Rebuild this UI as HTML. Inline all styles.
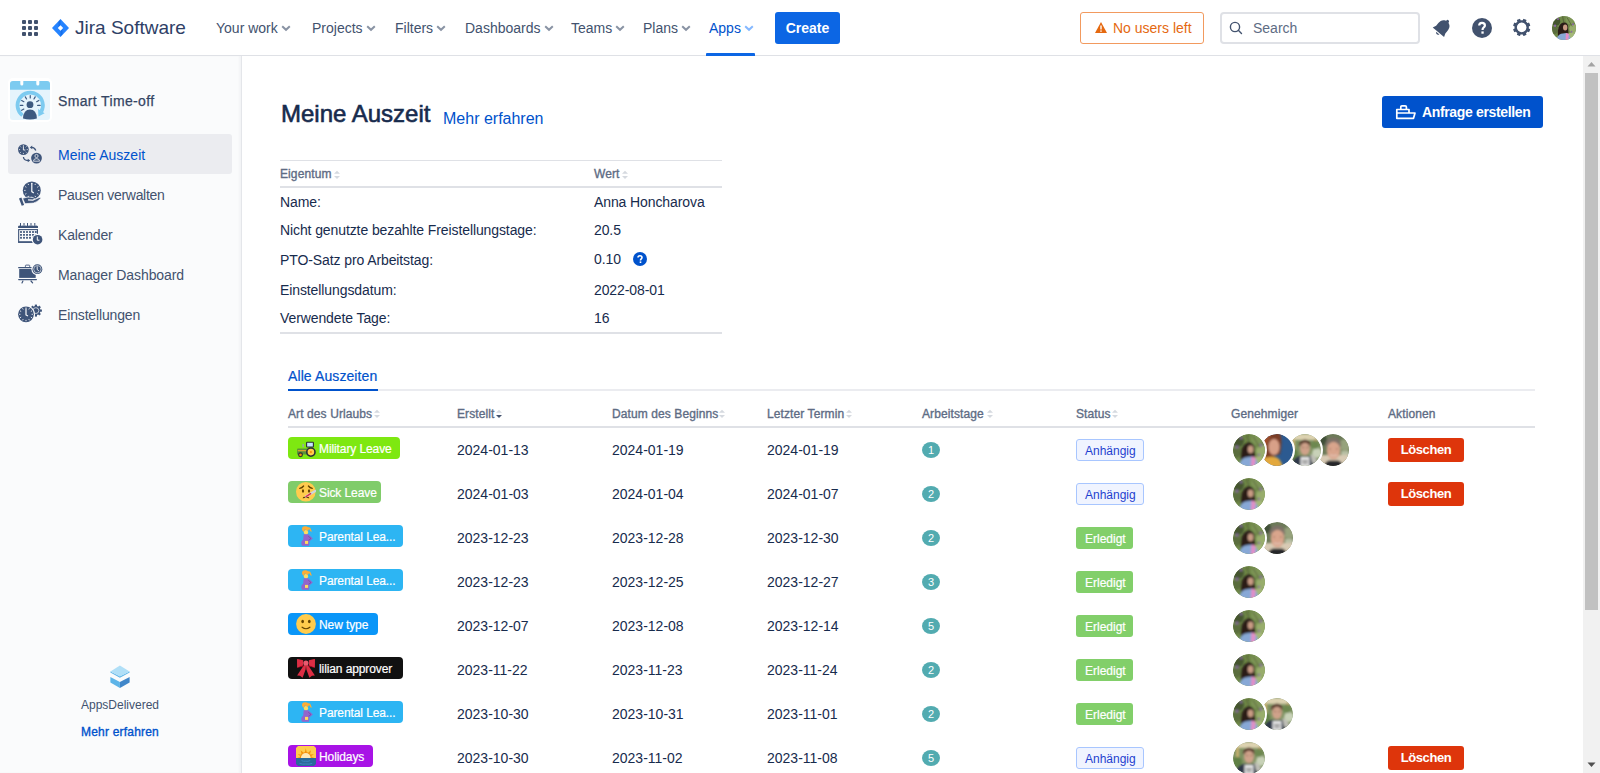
<!DOCTYPE html>
<html><head><meta charset="utf-8">
<style>
*{box-sizing:border-box;margin:0;padding:0}
html,body{width:1600px;height:773px;overflow:hidden;background:#fff;font-family:"Liberation Sans",sans-serif;color:#172B4D}
.a{position:absolute;white-space:nowrap}
#hdr{position:absolute;left:0;top:0;width:1600px;height:56px;background:#fff;border-bottom:1px solid #DFE1E6}
.nav{position:absolute;top:19px;font-size:14px;color:#42526E;height:18px;line-height:18px}
.chev{display:inline-block;width:10px;height:10px;margin-left:3px;vertical-align:0px}
#side{position:absolute;left:0;top:56px;width:242px;height:717px;background:#FAFBFC;border-right:1px solid #E4E6EA;box-shadow:inset -2px 0 2px rgba(9,30,66,0.03)}
.si{position:absolute;left:58px;font-size:14px;color:#42526E}
.ph{position:absolute;font-size:12px;color:#5E6C84;-webkit-text-stroke:0.35px #5E6C84;letter-spacing:0.1px}
.pv{position:absolute;font-size:14px;color:#172B4D;letter-spacing:-0.1px}
.th{position:absolute;top:407px;font-size:12px;color:#5E6C84;-webkit-text-stroke:0.35px #5E6C84;letter-spacing:0.1px}
.td{position:absolute;font-size:14px;color:#172B4D}
.loz{position:absolute;white-space:nowrap;left:288px;height:22px;border-radius:4px;color:#fff;font-size:12px;line-height:22px;letter-spacing:-0.1px;-webkit-text-stroke:0.2px #fff}
.num{position:absolute;left:922px;width:18px;height:16px;border-radius:50%;background:#52ABB0;color:#fff;font-size:11px;line-height:16px;text-align:center}
.st{position:absolute;left:1076px;height:22px;border-radius:3px;font-size:12px;line-height:20px;padding:0 8px}
.anh{border:1px solid #A8C6FF;background:#F0F4FF;color:#1F3FCF;width:68px;line-height:22px}
.erl{background:#82CF6A;color:#fff;width:57px;line-height:24px;padding:0 9px;-webkit-text-stroke:0.2px #fff}
.del{position:absolute;left:1388px;width:76px;height:24px;border-radius:3px;background:#DE350B;color:#fff;font-weight:bold;font-size:13px;line-height:24px;text-align:center;letter-spacing:-0.4px}
.av{position:absolute;width:32px;height:32px;border-radius:50%;box-shadow:0 0 0 2px #fff;background:#fff}
.emo{position:absolute;left:8px;top:1px;width:20px;height:20px}
.lt{position:absolute;left:31px;top:1px;white-space:nowrap}
</style></head><body>
<svg width="0" height="0" style="position:absolute">
<defs>
<filter id="bl" x="-10%" y="-10%" width="120%" height="120%"><feGaussianBlur stdDeviation="0.8"/></filter>
<clipPath id="cc"><circle cx="16" cy="16" r="16"/></clipPath>
<symbol id="e-mil" viewBox="0 0 20 20">
  <rect x="10.6" y="4.2" width="6.8" height="4.8" rx="0.6" fill="#C4E5FF" stroke="#292F33" stroke-width="1.1"/>
  <rect x="6.5" y="6" width="1.3" height="3.2" fill="#9AA0C0"/>
  <path d="M1 11.5 Q1 10.4 2.2 10.4 L18 10.4 L18 16.6 L1 16.6 Z" fill="#5C913B"/>
  <rect x="1.8" y="12.2" width="8.8" height="1" fill="#F4A82C"/>
  <circle cx="14.9" cy="14.1" r="4.1" fill="#FFCC4D" stroke="#292F33" stroke-width="1.6"/>
  <circle cx="14.9" cy="14.1" r="1.1" fill="#F4900C"/>
  <circle cx="4.5" cy="16.8" r="1.9" fill="#F4900C" stroke="#292F33" stroke-width="1.1"/>
</symbol>
<symbol id="e-sick" viewBox="0 0 20 20">
  <circle cx="9.8" cy="9.8" r="9.8" fill="#FFCC4D"/>
  <path d="M3.8 6.4 Q6.3 5.8 7.6 4 M16.2 6.4 Q13.7 5.8 12.4 4" stroke="#664500" stroke-width="1.3" fill="none" stroke-linecap="round"/>
  <ellipse cx="7" cy="9" rx="1.1" ry="1.7" fill="#664500"/><ellipse cx="13" cy="9" rx="1.1" ry="1.7" fill="#664500"/>
  <path d="M7.2 16.3 Q7.3 15.4 8.5 15.4 H11.5 Q12.7 15.4 12.8 16.3" stroke="#664500" stroke-width="1.1" fill="none"/>
  <path d="M9.9 14.6 L19.2 8.9" stroke="#CCD6DD" stroke-width="2.3" stroke-linecap="round"/>
  <path d="M10 14.6 L14.6 11.7" stroke="#DD2E44" stroke-width="1.4" stroke-linecap="round"/>
</symbol>
<symbol id="e-par" viewBox="0 0 20 20">
  <ellipse cx="10" cy="6.2" rx="2.1" ry="2.5" fill="#FFDC5D"/>
  <path d="M6 3.5 Q5.8 0.2 9.2 0.2 Q11.2 0.2 12 1.3 Q14.6 0.8 15 3.6 L15.9 5.7 L14.3 5.2 Q13.8 2.9 12.8 3.2 L12.2 4.8 Q9.8 4.6 8.8 3.2 Q8.5 5 7.3 6 Z" fill="#FFAC33"/>
  <path d="M7.7 8.3 L12.2 8.3 L16.8 12.5 L13.5 15.2 L13 19.7 L6 19.7 Q5.1 18 5.3 16.2 Q5.6 14.5 7.2 13.8 Z" fill="#9266CC"/>
  <path d="M12.3 10.3 L15 12.5 L12.6 14.2" stroke="#744EAA" stroke-width=".8" fill="none"/>
  <rect x="9" y="14.9" width="3.1" height="3" fill="#FFDC5D"/>
</symbol>
<symbol id="e-new" viewBox="0 0 20 20">
  <circle cx="10" cy="10" r="9.9" fill="#FFCC4D"/>
  <ellipse cx="6.65" cy="7.5" rx="1.35" ry="1.7" fill="#664500"/><ellipse cx="13.3" cy="7.5" rx="1.35" ry="1.7" fill="#664500"/>
  <path d="M6.1 13.2 Q10 16.3 13.9 13.2" stroke="#664500" stroke-width="1.2" fill="none" stroke-linecap="round"/>
</symbol>
<symbol id="e-bow" viewBox="0 0 20 20">
  <path d="M8 7 L6.2 9.8 L1.1 17.6 L4 17.8 L6.6 19.8 L9.6 11.5 L10 7.5 Z M12 7 L13.8 9.8 L18.9 17.6 L16 17.8 L13.4 19.8 L10.4 11.5 L10 7.5 Z" fill="#DD2E44"/>
  <path d="M1.6 0.9 Q1 0.9 1 1.6 L1.1 9.8 L7 8 L7.2 2.2 Z M18.4 0.9 Q19 0.9 19 1.6 L18.9 9.8 L13 8 L12.8 2.2 Z" fill="#DD2E44"/>
  <path d="M1.1 9.8 L7 7.2 L7.6 8.4 Z M18.9 9.8 L13 7.2 L12.4 8.4 Z" fill="#A0041E"/>
  <circle cx="9.9" cy="5.1" r="2.6" fill="#EA596E"/>
</symbol>
<symbol id="e-hol" viewBox="0 0 20 20">
  <path d="M2 0 H18 L20 2 V12 H0 V2 Z" fill="#FFCC4D"/>
  <path d="M0 12 H20 V18 L18 20 H2 L0 18 Z" fill="#2A6A9A"/>
  <g fill="#F4900C">
    <path d="M3.8 12 A6 6 0 0 1 15.8 12 Z"/>
    <path d="M8.8 6.5 L9.8 2.2 L10.8 6.5 Z"/>
    <path d="M5.6 7.9 L4.6 4.3 L7.3 6.6 Z M14 7.9 L15 4.3 L12.3 6.6 Z"/>
    <path d="M4.3 10 L1.7 8.2 L4.9 8.5 Z M15.3 10 L17.9 8.2 L14.7 8.5 Z"/>
    <path d="M3.9 11.8 L1.3 11.5 L4 10.8 Z M15.7 11.8 L18.3 11.5 L15.6 10.8 Z"/>
  </g>
  <path d="M4.9 12 A4.9 4.9 0 0 1 14.7 12 Z" fill="#FFE8B6"/>
  <path d="M5.5 14.6 Q7.5 15.6 9.8 15.2 Q12 15.6 14.2 14.6 M3.5 17.4 Q6.5 18.5 9.8 18 Q13 18.5 16.2 17.4" stroke="#3B88C3" stroke-width="1" fill="none"/>
</symbol>
<symbol id="av-a" viewBox="0 0 32 32"><g clip-path="url(#cc)"><rect width="32" height="32" fill="#6E8748"/><g filter="url(#bl)">
  <circle cx="5" cy="7" r="6" fill="#44552F"/><circle cx="24" cy="5" r="6" fill="#7E9656"/><circle cx="29" cy="17" r="6" fill="#98AD6C"/><circle cx="3" cy="19" r="5" fill="#5A6D3C"/><circle cx="26" cy="27" r="5" fill="#A4B878"/>
  <path d="M14 0 L16 10 M20 2 L27 14 M3 12 L9 16" stroke="#3A3A26" stroke-width="1" opacity=".6"/>
  <circle cx="4" cy="13" r="1.6" fill="#8A6AA0"/><circle cx="28" cy="11" r="1.5" fill="#8A6AA0"/><circle cx="8" cy="4" r="1.3" fill="#8A6AA0"/><circle cx="26" cy="21" r="1.2" fill="#8A6AA0"/>
  <path d="M8 27 Q7 17 10.5 11.5 Q14 7.5 18.5 9 Q22 11 21.5 17 L22 23 L17 26 Z" fill="#2A1E19"/>
  <ellipse cx="17.6" cy="15.3" rx="2.9" ry="3.9" fill="#C99C84"/>
  <path d="M5 34 Q7 25 12 23.5 L19 22.5 Q24 23.5 26 34 Z" fill="#87A8D6"/>
  <path d="M18.5 22.5 L22.5 23.5 L21.5 34 L18 34 Z" fill="#E68CC6"/>
</g></g></symbol>
<symbol id="av-b" viewBox="0 0 32 32"><g clip-path="url(#cc)"><rect width="32" height="32" fill="#2C5A90"/><g filter="url(#bl)">
  <path d="M-2 -2 L19 -2 Q22 8 19 20 L4 26 L-2 24 Z" fill="#7A3E28"/>
  <path d="M0 4 Q4 0 10 1 Q6 8 4 18 L0 20 Z" fill="#A24F2C"/>
  <ellipse cx="13" cy="13" rx="5.5" ry="8" fill="#D8A088"/>
  <path d="M-2 34 L-2 26 Q6 22 14 23 Q20 24 22 34 Z" fill="#E3A83E"/>
</g></g></symbol>
<symbol id="av-c" viewBox="0 0 32 32"><g clip-path="url(#cc)"><rect width="32" height="32" fill="#7E9262"/><g filter="url(#bl)">
  <rect x="0" y="0" width="32" height="6" fill="#DCD2B0"/><rect x="3" y="5" width="3" height="10" fill="#C9B070"/><rect x="25" y="5" width="3" height="10" fill="#B09A60"/>
  <circle cx="4" cy="20" r="5" fill="#5F8045"/><circle cx="28" cy="19" r="5" fill="#C8D2B8"/><circle cx="26" cy="11" r="4" fill="#6D8850"/>
  <path d="M10 12 Q10 5.5 16 5.5 Q22 5.5 21.5 12 Z" fill="#5A3E2E"/>
  <ellipse cx="16" cy="15" rx="5" ry="6.2" fill="#CFA28A"/>
  <path d="M13 13.5 H15 M17.5 13.5 H19.5" stroke="#7A5040" stroke-width="0.8"/>
  <path d="M1 34 Q3 24 10 22 L22 22 Q29 24 31 34 Z" fill="#2E3848"/>
  <path d="M21 20 Q27 21 29 29 L23 29 Z" fill="#BDBDB5"/>
  <path d="M11.5 23 L20.5 23 L20.5 34 L11.5 34 Z" fill="#E6E6E6"/><path d="M13 27 H19 M13.5 29.5 H18.5" stroke="#333" stroke-width="1.1"/>
</g></g></symbol>
<symbol id="av-d" viewBox="0 0 32 32"><g clip-path="url(#cc)"><rect width="32" height="32" fill="#6C7A58"/><g filter="url(#bl)">
  <rect x="0" y="21" width="32" height="13" fill="#D8CAB4"/><circle cx="28" cy="11" r="6" fill="#96A27C"/><circle cx="4" cy="6" r="6" fill="#3F5037"/><rect x="24" y="17" width="8" height="4" fill="#B8BFA4"/>
  <path d="M8.5 13 Q8 3.5 16.5 3.5 Q24.5 3.5 24 13 Z" fill="#7D7168"/>
  <ellipse cx="16.5" cy="16.5" rx="6.8" ry="8.8" fill="#D9A58C"/>
  <path d="M12 15 H14 M19 15 H21" stroke="#8A6050" stroke-width="0.8"/>
  <path d="M13 21 Q16.5 23 20 21" stroke="#E8CFC4" stroke-width="1" fill="none"/>
  <path d="M5 34 Q8 27.5 12 26.5 L21 26.5 Q25 27.5 28 34 Z" fill="#25282B"/>
</g></g></symbol>
</defs></svg>
<div id="hdr">
  <!-- grid icon -->
  <svg class="a" style="left:22px;top:20px" width="16" height="16" viewBox="0 0 16 16" fill="#42526E">
    <rect x="0" y="0" width="4" height="4" rx="1"/><rect x="6" y="0" width="4" height="4" rx="1"/><rect x="12" y="0" width="4" height="4" rx="1"/>
    <rect x="0" y="6" width="4" height="4" rx="1"/><rect x="6" y="6" width="4" height="4" rx="1"/><rect x="12" y="6" width="4" height="4" rx="1"/>
    <rect x="0" y="12" width="4" height="4" rx="1"/><rect x="6" y="12" width="4" height="4" rx="1"/><rect x="12" y="12" width="4" height="4" rx="1"/>
  </svg>
  <svg class="a" style="left:52px;top:19px" width="17" height="18" viewBox="0 0 17 18">
    <path d="M8.5 0 L17 9 L8.5 18 L0 9 Z" fill="#2684FF"/>
    <path d="M8.5 0.6 L6.4 3 L6.6 8.2 L8.5 6.2 Z M8.5 17.4 L10.6 15 L10.4 9.8 L8.5 11.8 Z" fill="#0A5FD8" opacity=".55"/>
    <path d="M8.5 6.2 L11.2 9 L8.5 11.8 L5.8 9 Z" fill="#fff"/>
  </svg>
  <div class="a" style="left:75px;top:16px;font-size:19px;color:#2E4066;line-height:24px">Jira Software</div>
  <div class="nav" style="left:216px">Your work<svg class="chev" viewBox="0 0 10 10"><path d="M1.2 3.2 L5 6.8 L8.8 3.2" stroke="#8993A4" stroke-width="2" fill="none"/></svg></div>
  <div class="nav" style="left:312px">Projects<svg class="chev" viewBox="0 0 10 10"><path d="M1.2 3.2 L5 6.8 L8.8 3.2" stroke="#8993A4" stroke-width="2" fill="none"/></svg></div>
  <div class="nav" style="left:395px">Filters<svg class="chev" viewBox="0 0 10 10"><path d="M1.2 3.2 L5 6.8 L8.8 3.2" stroke="#8993A4" stroke-width="2" fill="none"/></svg></div>
  <div class="nav" style="left:465px">Dashboards<svg class="chev" viewBox="0 0 10 10"><path d="M1.2 3.2 L5 6.8 L8.8 3.2" stroke="#8993A4" stroke-width="2" fill="none"/></svg></div>
  <div class="nav" style="left:571px">Teams<svg class="chev" viewBox="0 0 10 10"><path d="M1.2 3.2 L5 6.8 L8.8 3.2" stroke="#8993A4" stroke-width="2" fill="none"/></svg></div>
  <div class="nav" style="left:643px">Plans<svg class="chev" viewBox="0 0 10 10"><path d="M1.2 3.2 L5 6.8 L8.8 3.2" stroke="#8993A4" stroke-width="2" fill="none"/></svg></div>
  <div class="nav" style="left:709px;color:#0052CC">Apps<svg class="chev" viewBox="0 0 10 10"><path d="M1.2 3.2 L5 6.8 L8.8 3.2" stroke="#85B8FF" stroke-width="2" fill="none"/></svg></div>
  <div class="a" style="left:706px;top:53px;width:49px;height:3px;background:#0C66E4;border-radius:1px 1px 0 0"></div>
  <div class="a" style="left:775px;top:12px;width:65px;height:32px;background:#0C66E4;border-radius:3px;color:#fff;font-size:14px;font-weight:bold;line-height:32px;text-align:center">Create</div>

  <div class="a" style="left:1080px;top:12px;width:124px;height:32px;border:1px solid #F29A5E;border-radius:3px;color:#E56910;font-size:14px;line-height:30px">
    <svg class="a" style="left:14px;top:9px" width="12" height="11" viewBox="0 0 12 11"><path d="M6 0 L12 11 L0 11 Z" fill="#E56910"/><rect x="5.3" y="3.5" width="1.4" height="4" fill="#fff"/><rect x="5.3" y="8.4" width="1.4" height="1.4" fill="#fff"/></svg>
    <span class="a" style="left:32px;top:0">No users left</span>
  </div>
  <div class="a" style="left:1220px;top:12px;width:200px;height:32px;border:2px solid #DFE1E6;border-radius:4px;background:#fff">
    <svg class="a" style="left:7px;top:7px" width="14" height="14" viewBox="0 0 14 14"><circle cx="6" cy="6" r="4.6" stroke="#42526E" stroke-width="1.4" fill="none"/><path d="M9.3 9.3 L12.5 12.5" stroke="#42526E" stroke-width="1.4" stroke-linecap="round"/></svg>
    <span class="a" style="left:31px;top:5px;font-size:14px;color:#5E6C84;line-height:18px">Search</span>
  </div>
  <!-- bell -->
  <svg class="a" style="left:1431px;top:17px" width="22" height="22" viewBox="0 0 22 22"><g transform="rotate(40 11 11)" fill="#42526E"><circle cx="11" cy="2.4" r="1.5"/><path d="M11 2.8 C6.6 2.8 5 6 5 9.5 L5 13 L3.6 16.6 L18.4 16.6 L17 13 L17 9.5 C17 6 15.4 2.8 11 2.8 Z"/><path d="M8.8 17.6 Q11 20.6 13.2 17.6 Z"/></g></svg>
  <!-- help -->
  <svg class="a" style="left:1471px;top:17px" width="22" height="22" viewBox="0 0 22 22"><circle cx="11" cy="11" r="10" fill="#42526E"/><path d="M8.2 8.6 C8.2 6.8 9.5 5.8 11 5.8 C12.6 5.8 13.9 6.9 13.9 8.4 C13.9 10.4 11.6 10.6 11.6 12.4 L11.6 13" stroke="#fff" stroke-width="2.2" fill="none"/><rect x="10.4" y="14.4" width="2.3" height="2.3" fill="#fff"/></svg>
  <!-- gear -->
  <svg class="a" style="left:1511px;top:17px" width="22" height="22" viewBox="0 0 22 22"><g fill="#42526E"><rect x="8.95" y="1.700000000000001" width="3.5" height="3.6" rx="0.6" transform="rotate(22.5 10.7 10.4)"/><rect x="8.95" y="1.700000000000001" width="3.5" height="3.6" rx="0.6" transform="rotate(67.5 10.7 10.4)"/><rect x="8.95" y="1.700000000000001" width="3.5" height="3.6" rx="0.6" transform="rotate(112.5 10.7 10.4)"/><rect x="8.95" y="1.700000000000001" width="3.5" height="3.6" rx="0.6" transform="rotate(157.5 10.7 10.4)"/><rect x="8.95" y="1.700000000000001" width="3.5" height="3.6" rx="0.6" transform="rotate(202.5 10.7 10.4)"/><rect x="8.95" y="1.700000000000001" width="3.5" height="3.6" rx="0.6" transform="rotate(247.5 10.7 10.4)"/><rect x="8.95" y="1.700000000000001" width="3.5" height="3.6" rx="0.6" transform="rotate(292.5 10.7 10.4)"/><rect x="8.95" y="1.700000000000001" width="3.5" height="3.6" rx="0.6" transform="rotate(337.5 10.7 10.4)"/></g><circle cx="10.7" cy="10.4" r="6" stroke="#42526E" stroke-width="2.4" fill="none"/></svg>
  <!-- avatar -->
  <svg class="a" style="left:1552px;top:16px" width="24" height="24" viewBox="0 0 32 32"><use href="#av-a"/></svg>
</div>

<div id="side">
  <!-- app logo -->
  <svg class="a" style="left:8px;top:22px" width="44" height="44" viewBox="0 0 44 44">
    <rect x="0" y="0" width="44" height="44" rx="5" fill="#fff"/>
    <rect x="2" y="3" width="40" height="39" rx="3" fill="#E5F4FC"/>
    <path d="M2 11.8 L2 6 Q2 3 5 3 L39 3 Q42 3 42 6 L42 11.8 Z" fill="#7DCBF0"/>
    <rect x="12.3" y="1" width="3" height="6.5" rx="1.5" fill="#fff"/><rect x="28.3" y="1" width="3" height="6.5" rx="1.5" fill="#fff"/>
    <path d="M14.45 37.4 A12.7 12.7 0 1 1 33.3 33.5" stroke="#7DCBF0" stroke-width="3.7" fill="none"/>
    <path d="M30.1 31 L36.6 35.2 L30.4 38.4 Z" fill="#7DCBF0"/>
    <path d="M22.25 20.00 L22.25 17.50 M18.55 20.99 L17.30 18.83 M25.95 20.99 L27.20 18.83 M15.84 23.70 L13.68 22.45 M28.66 23.70 L30.82 22.45 M14.85 27.40 L12.35 27.40 M29.65 27.40 L32.15 27.40 M15.84 31.10 L13.68 32.35 " stroke="#3D5A80" stroke-width="1.2" stroke-linecap="round"/>
    <circle cx="22" cy="26.7" r="3.4" fill="#3D5A80"/>
    <path d="M15 40.5 Q15.5 31.6 22 31.6 Q28.5 31.6 28.9 40.5 Q22 42.5 15 40.5 Z" fill="#3D5A80"/>
  </svg>
  <div class="a" style="left:58px;top:37px;font-size:14px;color:#344563;line-height:17px;-webkit-text-stroke:0.25px #344563;letter-spacing:0.35px">Smart Time-off</div>
  <div class="a" style="left:8px;top:78px;width:224px;height:40px;background:#EBECF0;border-radius:3px"></div>
  <!-- icon 1 -->
  <svg class="a" style="left:14px;top:84px" width="32" height="32" viewBox="0 0 32 32" fill="#3E5479">
    <circle cx="9.4" cy="9.6" r="5.4"/><path d="M9.40 6.30 L9.40 5.10 M11.73 7.27 L12.58 6.42 M12.70 9.60 L13.90 9.60 M11.73 11.93 L12.58 12.78 M9.40 12.90 L9.40 14.10 M7.07 11.93 L6.22 12.78 M6.10 9.60 L4.90 9.60 M7.07 7.27 L6.22 6.42 " stroke="#EBECF0" stroke-width="0.8"/>
    <path d="M9.4 6.3 V10 H11.3" stroke="#EBECF0" stroke-width="1" fill="none"/>
    <circle cx="22.5" cy="18.1" r="5.4"/>
    <circle cx="22.5" cy="16" r="1.6" fill="none" stroke="#EBECF0" stroke-width="0.8"/>
    <path d="M19.4 21.2 Q19.6 18.6 22.5 18.6 Q25.4 18.6 25.6 21.2 Z" fill="none" stroke="#EBECF0" stroke-width="0.8"/>
    <path d="M17.3 7.4 Q20.5 7 21.8 10.5" stroke="#3E5479" stroke-width="1.3" fill="none"/><path d="M15.8 7.4 L18.2 5.6 L18.2 9.2 Z"/>
    <path d="M9.4 17 Q9.8 20.5 14 20.5" stroke="#3E5479" stroke-width="1.3" fill="none"/><path d="M16.2 20.5 L13.8 18.7 L13.8 22.3 Z"/>
  </svg>
  <div class="si" style="top:91px;color:#0052CC;line-height:17px">Meine Auszeit</div>
  <!-- icon 2 -->
  <svg class="a" style="left:14px;top:122px" width="32" height="32" viewBox="0 0 32 32" fill="#3E5479">
    <circle cx="17.8" cy="12.4" r="9"/><path d="M17.80 6.10 L17.80 4.80 M20.95 6.94 L21.60 5.82 M23.26 9.25 L24.38 8.60 M24.10 12.40 L25.40 12.40 M23.26 15.55 L24.38 16.20 M20.95 17.86 L21.60 18.98 M17.80 18.70 L17.80 20.00 M14.65 17.86 L14.00 18.98 M12.34 15.55 L11.22 16.20 M11.50 12.40 L10.20 12.40 M12.34 9.25 L11.22 8.60 M14.65 6.94 L14.00 5.82 " stroke="#FAFBFC" stroke-width="0.9"/>
    <path d="M17.8 5 V13.6 L19.8 14.9" stroke="#FAFBFC" stroke-width="1.2" fill="none"/>
    <path d="M8.6 20.3 L13 19.2 Q15 18.9 19 19.6 L20.6 20.5 Q20.6 21.9 18.5 21.9 L14 21.9 L19 22.3 L25 19.6 Q27.2 19 26.7 20.4 Q23 24.2 19.5 25.1 L11 25.7 Z" stroke="#FAFBFC" stroke-width="0.7"/>
    <path d="M5 20.6 L7.4 19.6 L10.1 26.9 L7.7 27.8 Z"/>
  </svg>
  <div class="si" style="top:131px;line-height:17px;letter-spacing:-0.3px">Pausen verwalten</div>
  <!-- icon 3 -->
  <svg class="a" style="left:14px;top:162px" width="32" height="32" viewBox="0 0 32 32" fill="#3E5479">
    <path d="M4.1 10.1 V8.2 Q5.3 7 6.5 8 Q8.2 6.8 10 8 Q11.7 6.8 13.5 8 Q15.2 6.8 17 8 Q18.7 6.8 20.5 8 Q22.3 6.8 24 8.2 V10.1 Z"/>
    <path d="M6.5 5 V8 M10 5 V8 M13.5 5 V8 M17 5 V8 M20.8 5 V8" stroke="#3E5479" stroke-width="1"/>
    <rect x="4.65" y="11.6" width="18.8" height="12.6" fill="none" stroke="#3E5479" stroke-width="1.1"/>
    <rect x="6.1" y="13.1" width="1.8" height="1.8"/><rect x="6.1" y="16" width="1.8" height="1.8"/><rect x="6.1" y="18.9" width="1.8" height="1.8"/><rect x="9.1" y="13.1" width="1.8" height="1.8"/><rect x="9.1" y="16" width="1.8" height="1.8"/><rect x="9.1" y="18.9" width="1.8" height="1.8"/><rect x="12.1" y="13.1" width="1.8" height="1.8"/><rect x="12.1" y="16" width="1.8" height="1.8"/><rect x="12.1" y="18.9" width="1.8" height="1.8"/><rect x="15.1" y="13.1" width="1.8" height="1.8"/><rect x="15.1" y="16" width="1.8" height="1.8"/><rect x="15.1" y="18.9" width="1.8" height="1.8"/><rect x="18.1" y="13.1" width="1.8" height="1.8"/><rect x="18.1" y="16" width="1.8" height="1.8"/><rect x="18.1" y="18.9" width="1.8" height="1.8"/><rect x="20.9" y="13.1" width="1.8" height="1.8"/><rect x="20.9" y="16" width="1.8" height="1.8"/><rect x="20.9" y="18.9" width="1.8" height="1.8"/>
    <rect x="4.1" y="23.3" width="19.9" height="1.5"/>
    <circle cx="23.6" cy="21.7" r="5.9" fill="#FAFBFC"/><circle cx="23.6" cy="21.7" r="4.8"/>
    <path d="M23.3 18.5 V22.2 H25.4" stroke="#FAFBFC" stroke-width="1" fill="none"/>
  </svg>
  <div class="si" style="top:171px;line-height:17px;letter-spacing:-0.2px">Kalender</div>
  <!-- icon 4 -->
  <svg class="a" style="left:14px;top:202px" width="32" height="32" viewBox="0 0 32 32" fill="#3E5479">
    <rect x="4.1" y="8.9" width="13.7" height="1.4" rx="0.5"/>
    <path d="M11.4 8.9 V7.7 Q11.4 7.1 12 7.1 H15.1 Q15.7 7.1 15.7 7.7 V8.9" stroke="#3E5479" stroke-width="0.9" fill="none"/>
    <rect x="5.2" y="11" width="16.5" height="8.9"/>
    <rect x="4.1" y="20.9" width="18.9" height="1.3" rx="0.6"/>
    <path d="M8.9 23 L8 24.9 M17 23 L18.6 24.9" stroke="#3E5479" stroke-width="1.2" stroke-linecap="round"/>
    <circle cx="23.4" cy="11.2" r="6" fill="#FAFBFC"/><circle cx="23.4" cy="11.2" r="4.9"/>
    <circle cx="23.4" cy="11.2" r="3.7" fill="none" stroke="#FAFBFC" stroke-width="0.6"/>
    <path d="M23.2 8.3 V11.6 L24.9 12.8" stroke="#FAFBFC" stroke-width="0.9" fill="none"/>
  </svg>
  <div class="si" style="top:211px;line-height:17px;letter-spacing:-0.1px">Manager Dashboard</div>
  <!-- icon 5 -->
  <svg class="a" style="left:14px;top:242px" width="32" height="32" viewBox="0 0 32 32" fill="#3E5479">
    <rect x="20.8" y="6.6" width="2.2" height="3" transform="rotate(0 21.9 12.6)"/><rect x="20.8" y="6.6" width="2.2" height="3" transform="rotate(45 21.9 12.6)"/><rect x="20.8" y="6.6" width="2.2" height="3" transform="rotate(90 21.9 12.6)"/><rect x="20.8" y="6.6" width="2.2" height="3" transform="rotate(135 21.9 12.6)"/><rect x="20.8" y="6.6" width="2.2" height="3" transform="rotate(180 21.9 12.6)"/><rect x="20.8" y="6.6" width="2.2" height="3" transform="rotate(225 21.9 12.6)"/><rect x="20.8" y="6.6" width="2.2" height="3" transform="rotate(270 21.9 12.6)"/><rect x="20.8" y="6.6" width="2.2" height="3" transform="rotate(315 21.9 12.6)"/><circle cx="21.9" cy="12.6" r="4.6"/>
    <circle cx="21.9" cy="12.6" r="2.9" fill="none" stroke="#FAFBFC" stroke-width="0.7"/><circle cx="21.9" cy="12.6" r="1.4"/>
    <circle cx="12" cy="16.3" r="9" fill="#FAFBFC"/><circle cx="12" cy="16.3" r="7.9"/>
    <path d="M12.00 10.70 L12.00 9.40 M14.80 11.45 L15.45 10.32 M16.85 13.50 L17.98 12.85 M17.60 16.30 L18.90 16.30 M16.85 19.10 L17.98 19.75 M14.80 21.15 L15.45 22.28 M12.00 21.90 L12.00 23.20 M9.20 21.15 L8.55 22.28 M7.15 19.10 L6.02 19.75 M6.40 16.30 L5.10 16.30 M7.15 13.50 L6.02 12.85 M9.20 11.45 L8.55 10.32 " stroke="#FAFBFC" stroke-width="0.9"/>
    <path d="M12 10.5 V17 L14 18" stroke="#FAFBFC" stroke-width="1.2" fill="none"/>
  </svg>
  <div class="si" style="top:251px;line-height:17px;letter-spacing:-0.15px">Einstellungen</div>
  <!-- footer -->
  <svg class="a" style="left:110px;top:609px" width="20" height="24" viewBox="0 0 20 24">
    <path d="M0.4 6.4 L9.9 11.3 L19.6 6.4 L19.6 7.6 L9.9 12.8 L0.4 7.6 Z" fill="#5DB4E8"/>
    <path d="M9.9 0.4 L19.6 6.4 L9.9 11.6 L0.4 6.4 Z" fill="#B0DFF7"/>
    <path d="M0.4 12 L9.9 16.9 L9.9 22.9 L0.4 17.5 Z" fill="#5DB4E8"/>
    <path d="M19.6 12 L9.9 16.9 L9.9 22.9 L19.6 17.5 Z" fill="#3F86C9"/>
  </svg>
  <div class="a" style="left:0;width:240px;top:642px;text-align:center;font-size:12px;color:#42526E;line-height:15px">AppsDelivered</div>
  <div class="a" style="left:0;width:240px;top:669px;text-align:center;font-size:12px;color:#0052CC;line-height:15px;-webkit-text-stroke:0.35px #0052CC;letter-spacing:0.2px">Mehr erfahren</div>
</div>

<div id="main">
<div class="a" style="left:281px;top:99px;font-size:24px;color:#172B4D;line-height:30px;-webkit-text-stroke:0.6px #172B4D">Meine Auszeit</div>
<div class="a" style="left:443px;top:109px;font-size:16px;color:#0052CC;line-height:20px">Mehr erfahren</div>
<div class="a" style="left:1382px;top:96px;width:161px;height:32px;background:#0052CC;border-radius:3px">
<svg class="a" style="left:13px;top:8px" width="22" height="16" viewBox="0 0 22 16"><path d="M5.8 5.5 V3 Q5.8 1.8 7 1.8 H10.2 Q11.4 1.8 11.4 3 V5.5 M1.8 9 V5.5 H14 V9 M1.8 14.3 V9 H20 L18.5 14.3 Z" stroke="#fff" stroke-width="1.7" fill="none" stroke-linejoin="round"/></svg>
<span class="a" style="left:40px;top:8px;font-size:14px;font-weight:bold;color:#fff;line-height:17px;letter-spacing:-0.35px">Anfrage erstellen</span></div>
<div class="a" style="left:280px;top:160px;width:442px;height:1px;background:#DFE1E6"></div>
<div class="ph" style="left:280px;top:167px;line-height:15px">Eigentum</div>
<div class="ph" style="left:594px;top:167px;line-height:15px">Wert</div>
<svg class="a" style="left:334px;top:170px" width="6" height="9" viewBox="0 0 6 9"><path d="M0 3.7 L3 0.8 L6 3.7 Z" fill="#D5D9DF"/><path d="M0 6.1 L3 8.9 L6 6.1 Z" fill="#D5D9DF"/></svg>
<svg class="a" style="left:622px;top:170px" width="6" height="9" viewBox="0 0 6 9"><path d="M0 3.7 L3 0.8 L6 3.7 Z" fill="#D5D9DF"/><path d="M0 6.1 L3 8.9 L6 6.1 Z" fill="#D5D9DF"/></svg>
<div class="a" style="left:280px;top:186px;width:442px;height:2px;background:#DFE1E6"></div>
<div class="pv" style="left:280px;top:194px;line-height:17px">Name:</div>
<div class="pv" style="left:594px;top:194px;line-height:17px">Anna Honcharova</div>
<div class="pv" style="left:280px;top:222px;line-height:17px">Nicht genutzte bezahlte Freistellungstage:</div>
<div class="pv" style="left:594px;top:222px;line-height:17px">20.5</div>
<div class="pv" style="left:280px;top:252px;line-height:17px">PTO-Satz pro Arbeitstag:</div>
<div class="pv" style="left:594px;top:251px;line-height:17px">0.10</div>
<div class="pv" style="left:280px;top:282px;line-height:17px">Einstellungsdatum:</div>
<div class="pv" style="left:594px;top:282px;line-height:17px">2022-08-01</div>
<div class="pv" style="left:280px;top:310px;line-height:17px">Verwendete Tage:</div>
<div class="pv" style="left:594px;top:310px;line-height:17px">16</div>
<svg class="a" style="left:633px;top:252px" width="14" height="14" viewBox="0 0 14 14"><circle cx="7" cy="7" r="7" fill="#0052CC"/><path d="M5 5.6 C5 4.4 5.9 3.7 7 3.7 C8.1 3.7 9 4.4 9 5.4 C9 6.8 7.5 6.9 7.5 8.2 L7.5 8.6" stroke="#fff" stroke-width="1.6" fill="none"/><rect x="6.7" y="9.4" width="1.6" height="1.6" fill="#fff"/></svg>
<div class="a" style="left:280px;top:332px;width:442px;height:2px;background:#DFE1E6"></div>
<div class="a" style="left:288px;top:367.5px;font-size:14px;color:#0052CC;line-height:17px;letter-spacing:0.1px;-webkit-text-stroke:0.2px #0052CC">Alle Auszeiten</div>
<div class="a" style="left:288px;top:389px;width:1247px;height:2px;background:#EBECF0"></div>
<div class="a" style="left:288px;top:389px;width:90px;height:2px;background:#0052CC"></div>
<div class="th" style="left:288px;line-height:15px">Art des Urlaubs</div>
<svg class="a" style="left:374px;top:409px" width="6" height="9" viewBox="0 0 6 9"><path d="M0 3.7 L3 0.8 L6 3.7 Z" fill="#D5D9DF"/><path d="M0 6.1 L3 8.9 L6 6.1 Z" fill="#D5D9DF"/></svg>
<div class="th" style="left:457px;line-height:15px">Erstellt</div>
<svg class="a" style="left:496px;top:409px" width="6" height="9" viewBox="0 0 6 9"><path d="M0 3.7 L3 0.8 L6 3.7 Z" fill="#D5D9DF"/><path d="M0 6.1 L3 8.9 L6 6.1 Z" fill="#42526E"/></svg>
<div class="th" style="left:612px;line-height:15px">Datum des Beginns</div>
<svg class="a" style="left:719px;top:409px" width="6" height="9" viewBox="0 0 6 9"><path d="M0 3.7 L3 0.8 L6 3.7 Z" fill="#D5D9DF"/><path d="M0 6.1 L3 8.9 L6 6.1 Z" fill="#D5D9DF"/></svg>
<div class="th" style="left:767px;line-height:15px">Letzter Termin</div>
<svg class="a" style="left:846px;top:409px" width="6" height="9" viewBox="0 0 6 9"><path d="M0 3.7 L3 0.8 L6 3.7 Z" fill="#D5D9DF"/><path d="M0 6.1 L3 8.9 L6 6.1 Z" fill="#D5D9DF"/></svg>
<div class="th" style="left:922px;line-height:15px">Arbeitstage</div>
<svg class="a" style="left:987px;top:409px" width="6" height="9" viewBox="0 0 6 9"><path d="M0 3.7 L3 0.8 L6 3.7 Z" fill="#D5D9DF"/><path d="M0 6.1 L3 8.9 L6 6.1 Z" fill="#D5D9DF"/></svg>
<div class="th" style="left:1076px;line-height:15px">Status</div>
<svg class="a" style="left:1112px;top:409px" width="6" height="9" viewBox="0 0 6 9"><path d="M0 3.7 L3 0.8 L6 3.7 Z" fill="#D5D9DF"/><path d="M0 6.1 L3 8.9 L6 6.1 Z" fill="#D5D9DF"/></svg>
<div class="th" style="left:1231px;line-height:15px">Genehmiger</div>
<div class="th" style="left:1388px;line-height:15px">Aktionen</div>
<div class="a" style="left:288px;top:426px;width:1247px;height:2px;background:#DFE1E6"></div>
<div class="loz" style="top:437px;width:112px;background:#7EE811"><svg class="emo"><use href="#e-mil"/></svg><span class="lt">Military Leave</span></div>
<div class="td" style="left:457px;top:442px;line-height:17px">2024-01-13</div>
<div class="td" style="left:612px;top:442px;line-height:17px">2024-01-19</div>
<div class="td" style="left:767px;top:442px;line-height:17px">2024-01-19</div>
<div class="num" style="top:442px">1</div>
<div class="st anh" style="top:439px">Anhängig</div>
<svg class="av" style="left:1233px;top:434px;z-index:10" viewBox="0 0 32 32"><use href="#av-a"/></svg>
<svg class="av" style="left:1261px;top:434px;z-index:9" viewBox="0 0 32 32"><use href="#av-b"/></svg>
<svg class="av" style="left:1289px;top:434px;z-index:8" viewBox="0 0 32 32"><use href="#av-c"/></svg>
<svg class="av" style="left:1317px;top:434px;z-index:7" viewBox="0 0 32 32"><use href="#av-d"/></svg>
<div class="del" style="top:438px">Löschen</div>
<div class="loz" style="top:481px;width:93px;background:#80CC6A"><svg class="emo"><use href="#e-sick"/></svg><span class="lt">Sick Leave</span></div>
<div class="td" style="left:457px;top:486px;line-height:17px">2024-01-03</div>
<div class="td" style="left:612px;top:486px;line-height:17px">2024-01-04</div>
<div class="td" style="left:767px;top:486px;line-height:17px">2024-01-07</div>
<div class="num" style="top:486px">2</div>
<div class="st anh" style="top:483px">Anhängig</div>
<svg class="av" style="left:1233px;top:478px;z-index:10" viewBox="0 0 32 32"><use href="#av-a"/></svg>
<div class="del" style="top:482px">Löschen</div>
<div class="loz" style="top:525px;width:115px;background:#2DB5F3"><svg class="emo"><use href="#e-par"/></svg><span class="lt">Parental Lea...</span></div>
<div class="td" style="left:457px;top:530px;line-height:17px">2023-12-23</div>
<div class="td" style="left:612px;top:530px;line-height:17px">2023-12-28</div>
<div class="td" style="left:767px;top:530px;line-height:17px">2023-12-30</div>
<div class="num" style="top:530px">2</div>
<div class="st erl" style="top:527px">Erledigt</div>
<svg class="av" style="left:1233px;top:522px;z-index:10" viewBox="0 0 32 32"><use href="#av-a"/></svg>
<svg class="av" style="left:1261px;top:522px;z-index:9" viewBox="0 0 32 32"><use href="#av-d"/></svg>
<div class="loz" style="top:569px;width:115px;background:#2DB5F3"><svg class="emo"><use href="#e-par"/></svg><span class="lt">Parental Lea...</span></div>
<div class="td" style="left:457px;top:574px;line-height:17px">2023-12-23</div>
<div class="td" style="left:612px;top:574px;line-height:17px">2023-12-25</div>
<div class="td" style="left:767px;top:574px;line-height:17px">2023-12-27</div>
<div class="num" style="top:574px">3</div>
<div class="st erl" style="top:571px">Erledigt</div>
<svg class="av" style="left:1233px;top:566px;z-index:10" viewBox="0 0 32 32"><use href="#av-a"/></svg>
<div class="loz" style="top:613px;width:90px;background:#0A96F8"><svg class="emo"><use href="#e-new"/></svg><span class="lt">New type</span></div>
<div class="td" style="left:457px;top:618px;line-height:17px">2023-12-07</div>
<div class="td" style="left:612px;top:618px;line-height:17px">2023-12-08</div>
<div class="td" style="left:767px;top:618px;line-height:17px">2023-12-14</div>
<div class="num" style="top:618px">5</div>
<div class="st erl" style="top:615px">Erledigt</div>
<svg class="av" style="left:1233px;top:610px;z-index:10" viewBox="0 0 32 32"><use href="#av-a"/></svg>
<div class="loz" style="top:657px;width:115px;background:#111111"><svg class="emo"><use href="#e-bow"/></svg><span class="lt">lilian approver</span></div>
<div class="td" style="left:457px;top:662px;line-height:17px">2023-11-22</div>
<div class="td" style="left:612px;top:662px;line-height:17px">2023-11-23</div>
<div class="td" style="left:767px;top:662px;line-height:17px">2023-11-24</div>
<div class="num" style="top:662px">2</div>
<div class="st erl" style="top:659px">Erledigt</div>
<svg class="av" style="left:1233px;top:654px;z-index:10" viewBox="0 0 32 32"><use href="#av-a"/></svg>
<div class="loz" style="top:701px;width:115px;background:#2DB5F3"><svg class="emo"><use href="#e-par"/></svg><span class="lt">Parental Lea...</span></div>
<div class="td" style="left:457px;top:706px;line-height:17px">2023-10-30</div>
<div class="td" style="left:612px;top:706px;line-height:17px">2023-10-31</div>
<div class="td" style="left:767px;top:706px;line-height:17px">2023-11-01</div>
<div class="num" style="top:706px">2</div>
<div class="st erl" style="top:703px">Erledigt</div>
<svg class="av" style="left:1233px;top:698px;z-index:10" viewBox="0 0 32 32"><use href="#av-a"/></svg>
<svg class="av" style="left:1261px;top:698px;z-index:9" viewBox="0 0 32 32"><use href="#av-c"/></svg>
<div class="loz" style="top:745px;width:85px;background:#A813E6"><svg class="emo"><use href="#e-hol"/></svg><span class="lt">Holidays</span></div>
<div class="td" style="left:457px;top:750px;line-height:17px">2023-10-30</div>
<div class="td" style="left:612px;top:750px;line-height:17px">2023-11-02</div>
<div class="td" style="left:767px;top:750px;line-height:17px">2023-11-08</div>
<div class="num" style="top:750px">5</div>
<div class="st anh" style="top:747px">Anhängig</div>
<svg class="av" style="left:1233px;top:742px;z-index:10" viewBox="0 0 32 32"><use href="#av-c"/></svg>
<div class="del" style="top:746px">Löschen</div>
<div class="a" style="left:1583px;top:56px;width:17px;height:717px;background:#F1F1F1"></div>
<svg class="a" style="left:1587px;top:61px" width="9" height="6" viewBox="0 0 9 6"><path d="M0.5 5.5 L4.5 1 L8.5 5.5 Z" fill="#A3A3A3"/></svg>
<div class="a" style="left:1585px;top:73px;width:13px;height:537px;background:#C1C1C1"></div>
<svg class="a" style="left:1587px;top:762px" width="9" height="6" viewBox="0 0 9 6"><path d="M0.5 0.5 L4.5 5 L8.5 0.5 Z" fill="#505050"/></svg>
</div>
</body></html>
